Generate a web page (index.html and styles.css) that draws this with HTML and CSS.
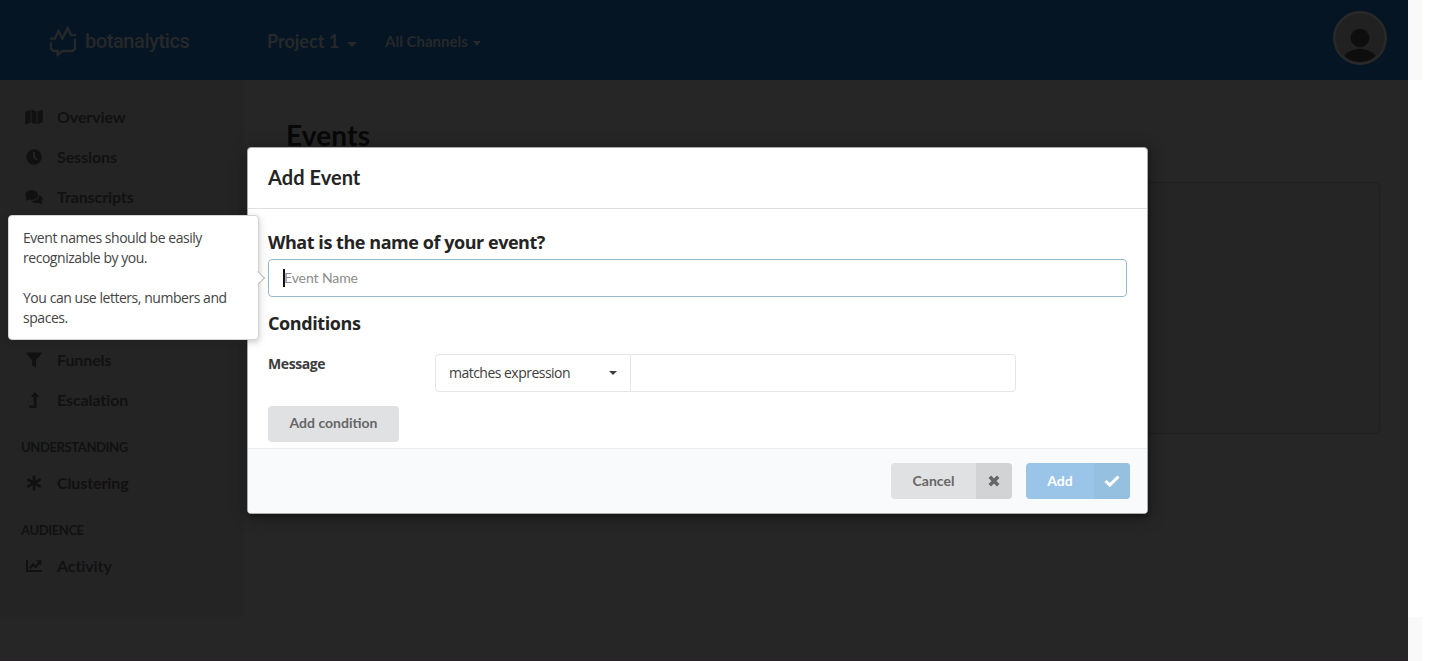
FILE: index.html
```html
<!DOCTYPE html>
<html lang="en">
<head>
<meta charset="utf-8">
<title>Botanalytics - Events</title>
<link rel="stylesheet" href="styles.css">
</head>
<body>
<div class="page">
  <header class="topbar">
    <div class="brand">
      <svg class="brand-mark" viewBox="0 0 28 32" width="28" height="32"><path d="M1 13.700h4.800L9.500 6l4 7.500L18.700 3l3.500 7.200H27M26 13.700V24L23.500 26H13.500L8.700 29.800V26H4.500L2 23.500V17.200" fill="none" stroke="currentColor" stroke-width="2.300"/></svg>
      <span class="brand-name">botanalytics</span>
    </div>
    <div class="project">Project 1<i class="caret"></i></div>
    <div class="channels">All Channels<i class="caret caret-small"></i></div>
    <svg class="avatar" viewBox="0 0 54 54" width="54" height="54"><defs><clipPath id="face"><circle cx="27" cy="27" r="24"/></clipPath></defs><circle cx="27" cy="27" r="25.800" fill="#212121" stroke="#292929" stroke-width="2.400"/><g clip-path="url(#face)" fill="#0e0e0e"><circle cx="27" cy="27" r="9.300"/><ellipse cx="27" cy="51" rx="18" ry="13"/></g></svg>
  </header>
  <div class="body">
    <nav class="sidebar">
      <a class="item"><svg viewBox="0 0 18 16" width="18" height="16"><path d="M.3 3 5.500.8v12.600L.3 15.400zM6.500.8l5 1.800v12.600l-5-1.800zM12.500 2.600 17.700.5v12.600l-5.200 2.100z"/></svg><span>Overview</span></a>
      <a class="item"><svg viewBox="0 0 18 16" width="18" height="16"><path fill-rule="evenodd" d="M9 .3a7.700 7.700 0 1 1 0 15.400A7.700 7.700 0 0 1 9 .3zM8.100 3v5.500l3 3 1.400-1.300-2.400-2.500V3z"/></svg><span>Sessions</span></a>
      <a class="item"><svg viewBox="0 0 18 16" width="18" height="16"><path d="M6.700 1C10.200 1 13 3.100 13 5.900s-2.800 4.900-6.300 4.900a8 8 0 0 1-2.500-.4C3.200 11.200 1.800 11.600.3 11.600c.8-.8 1.300-1.700 1.500-2.500A4.700 4.700 0 0 1 .4 5.900C.4 3.100 3.200 1 6.700 1zM14 6c2.200.7 3.700 2.200 3.700 4.100 0 1.100-.5 2-1.200 2.800.2.800.6 1.600 1.300 2.300-1.500 0-2.800-.5-3.900-1.200-3 .8-6.300 0-7.600-2.100C10.800 12.100 14.300 9.400 14 6z"/></svg><span>Transcripts</span></a>
      <div class="gap"></div>
      <a class="item"><svg viewBox="0 0 18 16" width="18" height="16"><path d="M1.600.5h14.800q.7.500.1 1.200L11 8v7.700L7.100 13V8L1.400 1.700Q.9.900 1.600.5z"/></svg><span>Funnels</span></a>
      <a class="item"><svg viewBox="0 0 18 16" width="18" height="16"><path d="M10 0l4.500 5h-3v11H5l-1-1.200V13.500h4.700V5h-3z"/></svg><span>Escalation</span></a>
      <h4 class="group">UNDERSTANDING</h4>
      <a class="item"><svg viewBox="0 0 18 16" width="18" height="16"><path d="M9 .5v15M2.200 4.200l13.600 7.600M15.800 4.200 2.200 11.800" fill="none" stroke="currentColor" stroke-width="2.600"/></svg><span>Clustering</span></a>
      <h4 class="group">AUDIENCE</h4>
      <a class="item"><svg viewBox="0 0 18 16" width="18" height="16"><path d="M2 2v11h15M4.500 10.500 8 6.500l2.500 2.500 4-4.500" fill="none" stroke="currentColor" stroke-width="2"/><path d="M11 2.200h5.300v5.300z"/></svg><span>Activity</span></a>
    </nav>
    <main class="content">
      <h1 class="title">Events</h1>
      <section class="panel"></section>
    </main>
  </div>
</div>

<div class="modal">
  <div class="modal-head">Add Event</div>
  <div class="modal-body">
    <label class="question">What is the name of your event?</label>
    <div class="field"><span class="cursor"></span>Event Name</div>
    <div class="conditions">Conditions</div>
    <div class="row">
      <div class="row-label">Message</div>
      <div class="select"><span class="select-text">matches expression</span><i class="caret select-caret"></i></div>
      <div class="value"></div>
    </div>
    <div class="button add-condition">Add condition</div>
  </div>
  <div class="modal-foot">
    <div class="button labeled cancel"><span class="label">Cancel</span><span class="icon"><svg viewBox="0 0 12 12" width="12" height="12"><path d="M1.800 1.800l8.400 8.400M10.200 1.800l-8.400 8.400" stroke="currentColor" stroke-width="3.600"/></svg></span></div>
    <div class="button labeled primary"><span class="label">Add</span><span class="icon"><svg viewBox="0 0 16 12" width="16" height="12"><path d="M1.500 6l4.300 4.100L14.500 1.500" fill="none" stroke="currentColor" stroke-width="3"/></svg></span></div>
  </div>
</div>

<div class="tip">
  <p>Event names should be easily<br>recognizable by you.</p>
  <p>You can use letters, numbers and<br>spaces.</p>
</div>
</body>
</html>
```

FILE: styles.css
```css
* { box-sizing: border-box; }
body { margin: 0; width: 1436px; height: 661px; overflow: hidden; position: relative; font-family: Lato, sans-serif;
  background: linear-gradient(#f9f9f9, #f9f9f9) 1408px 0 / 14px 80px no-repeat, linear-gradient(#f9f9f9, #f9f9f9) 1408px 617px / 14px 44px no-repeat, #fff; }
.page { width: 1408px; height: 661px; background: #262626; border-bottom: 1px solid #2a1f26; }
.topbar { height: 80px; background: #051524; color: #272829; display: flex; align-items: center; padding: 0 21px 0 49px; }
.brand { display: flex; align-items: center; width: 218px; height: 32px; margin-top: 2px; }
.brand-mark { margin-right: 8px; }
.brand-name { font: 500 20px/28px Roboto, sans-serif; letter-spacing: -.42px; }
.project { width: 118px; font-size: 18px; font-weight: 700; line-height: 24px; padding-top: 1px; white-space: nowrap; }
.channels { font-size: 15px; font-weight: 700; line-height: 22px; padding-top: 1px; letter-spacing: 0; }
.caret { display: inline-block; border: 5px solid transparent; border-top: 5px solid currentColor; border-bottom: 0; margin-left: 8px; vertical-align: 1px; }
.caret-small { border-width: 5px 4px 0; margin-left: 5px; }
.avatar { margin-left: auto; margin-top: -4px; }
.body { display: flex; height: 580px; }
.sidebar { width: 244px; height: 537px; padding-top: 17px; background: #242424; color: #111; }
.item { display: flex; align-items: center; height: 40px; padding-left: 25px; font-size: 16px; font-weight: 700; letter-spacing: -.1px; }
.item span { line-height: 20px; }
.item svg { margin-right: 14px; fill: currentColor; }
.gap { height: 123px; }
.group { margin: 0; height: 43px; padding: 19px 0 0 21px; font-size: 13px; line-height: 17px; font-weight: 700; letter-spacing: -.38px; }
.content { flex: 1; padding: 37px 28px 0 42px; color: #080808; }
.title { margin: 0; font-size: 28px; line-height: 36px; font-weight: 700; letter-spacing: .15px; }
.panel { margin-top: 29px; height: 252px; border: 1px solid #202020; border-radius: 5px; background: #252525; }

.modal { position: absolute; left: 247px; top: 147px; width: 901px; height: 367px; border: 1px solid #aaa; border-radius: 4px; background: #fff; box-shadow: 1px 3px 3px rgba(0,0,0,.2), 1px 3px 15px 2px rgba(0,0,0,.3); overflow: hidden; color: #242424; display: flex; flex-direction: column; }
.modal-head { height: 61px; padding: 0 20px; border-bottom: 1px solid #dfdfe0; font-size: 20px; font-weight: 700; line-height: 59px; letter-spacing: .05px; }
.modal-body { flex: 1; padding: 21px 20px 0; font-family: "Open Sans", sans-serif; }
.question, .conditions { display: block; font-size: 18px; font-weight: 700; line-height: 25px; letter-spacing: -.45px; }
.field { height: 38px; margin-top: 4px; border: 1px solid #96b8cb; border-radius: 4px; padding: 0 14px; font: 400 14px/36px Lato, sans-serif; color: #8c8c8c; display: flex; align-items: center; letter-spacing: -.1px; }
.cursor { width: 2px; height: 18px; background: #111; margin-right: -1px; }
.conditions { margin-top: 14px; letter-spacing: -.4px; }
.row { display: flex; height: 38px; margin-top: 18px; }
.row-label { width: 167px; font-size: 14px; font-weight: 700; line-height: 20px; color: #3c3c3c; letter-spacing: -.4px; }
.select { width: 196px; border: 1px solid #e6e6e7; border-radius: 4px 0 0 4px; display: flex; align-items: center; justify-content: space-between; padding: 0 13px; color: #3d3d3d; }
.select-text { font-size: 14px; line-height: 20px; letter-spacing: -.52px; }
.select-caret { border-width: 4px 4px 0; }
.value { width: 385px; border: 1px solid #e6e6e7; border-left: 0; border-radius: 0 4px 4px 0; }
.button { height: 36px; border-radius: 4px; background: #e0e1e2; color: #666; font: 700 14px/36px Lato, sans-serif; text-align: center; }
.add-condition { width: 131px; margin-top: 14px; line-height: 34px; }
.modal-foot { height: 65px; border-top: 1px solid #eceded; background: #f9fafb; display: flex; justify-content: flex-end; gap: 14px; padding: 14px 17px; }
.labeled { display: flex; overflow: hidden; }
.label { flex: 1; }
.icon { width: 36px; background: #d2d3d4; display: flex; align-items: center; justify-content: center; }
.cancel { width: 121px; }
.primary { width: 104px; background: #9ac5e8; color: #fff; }
.primary .icon { background: #95c0df; }

.tip { position: absolute; left: 8px; top: 215px; width: 251px; height: 125px; border: 1px solid #d4d4d5; border-radius: 4px; background: #fff; box-shadow: 0 2px 4px rgba(34,36,38,.12), 0 2px 10px rgba(34,36,38,.15); padding: 12px 14px; font: 400 14px/20px "Open Sans", sans-serif; letter-spacing: -.46px; color: #444; white-space: nowrap; }
.tip p { margin: 0 0 20px; }
.tip::after { content: ""; position: absolute; right: -5px; top: 57px; width: 9px; height: 9px; background: #fff; border: solid #bababc; border-width: 1px 1px 0 0; transform: rotate(45deg); }
```
